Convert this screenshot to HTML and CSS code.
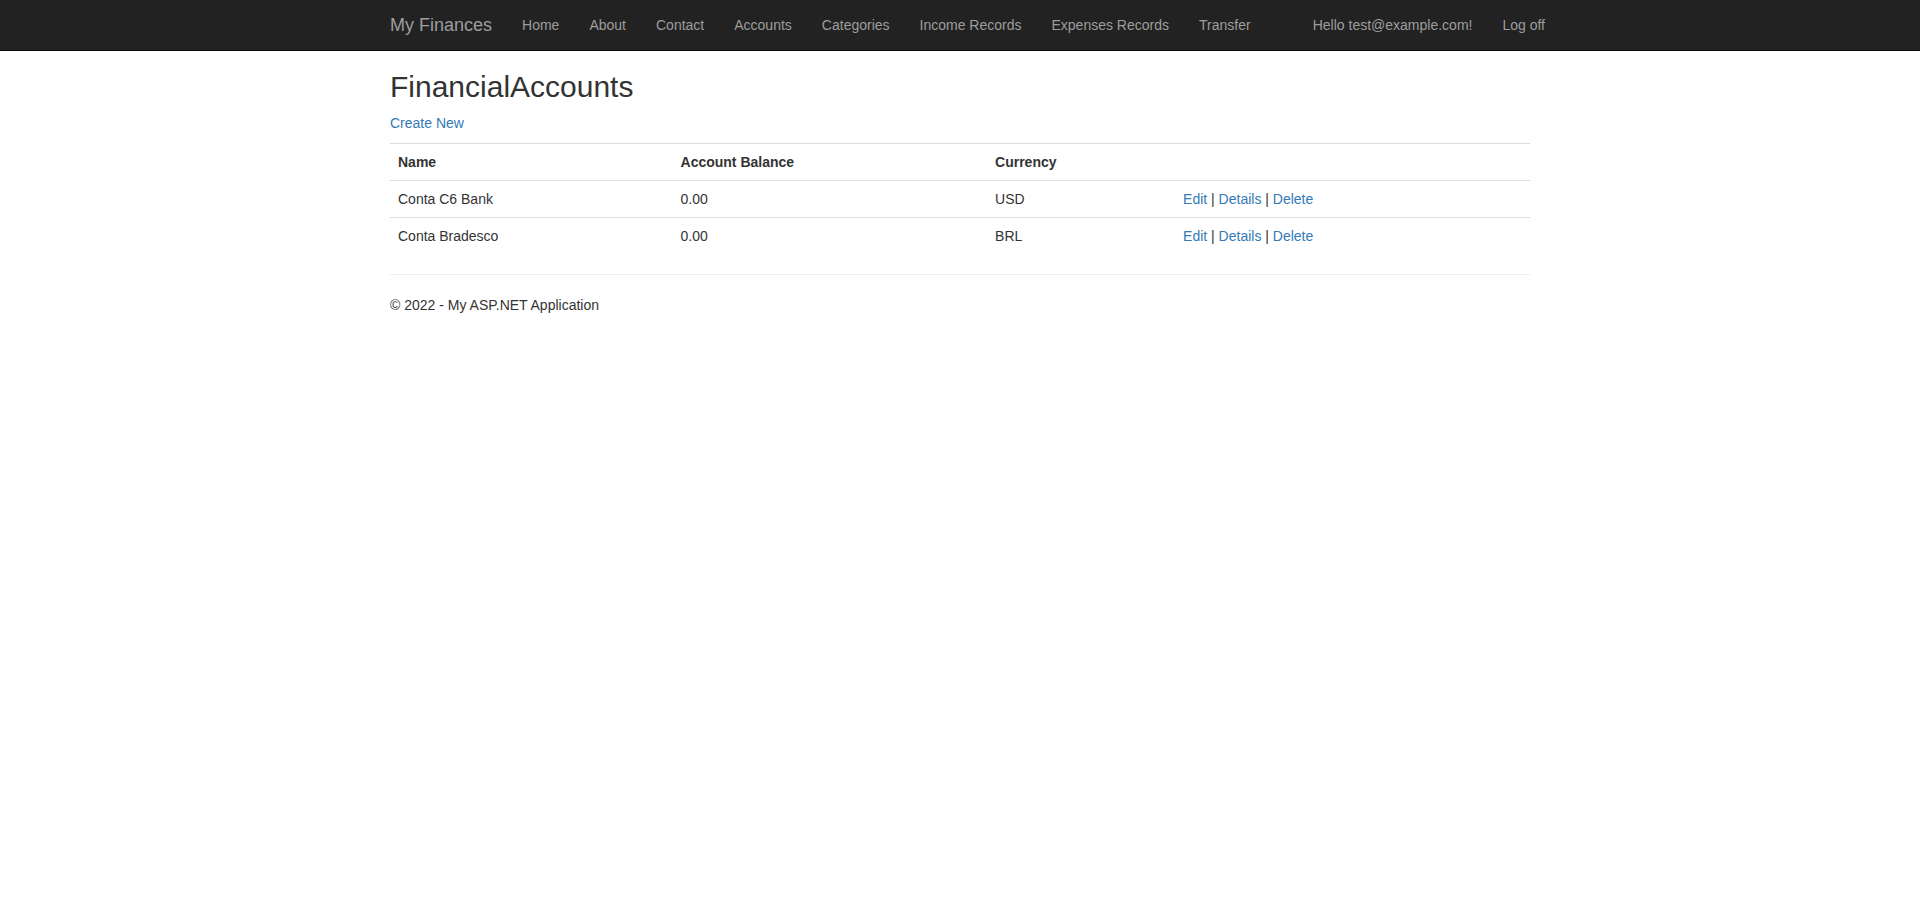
FILE: index.html
```html
<!DOCTYPE html>
<html>
<head>
<meta charset="utf-8">
<title>FinancialAccounts</title>
<link rel="stylesheet" href="styles.css">
</head>
<body>
<div class="navbar">
  <div class="container nav-container">
    <a class="navbar-brand" href="#">My Finances</a>
    <ul class="nav">
      <li><a href="#">Home</a></li>
      <li><a href="#">About</a></li>
      <li><a href="#">Contact</a></li>
      <li><a href="#">Accounts</a></li>
      <li><a href="#">Categories</a></li>
      <li><a href="#">Income Records</a></li>
      <li><a href="#">Expenses Records</a></li>
      <li><a href="#">Transfer</a></li>
    </ul>
    <ul class="nav nav-right">
      <li><a href="#">Hello test@example.com!</a></li>
      <li><a href="#">Log off</a></li>
    </ul>
  </div>
</div>
<div class="container body-content">
  <h2 class="title">FinancialAccounts</h2>
  <p class="para"><a href="#">Create New</a></p>
  <table class="table">
    <tr>
      <th>Name</th>
      <th>Account Balance</th>
      <th>Currency</th>
      <th></th>
    </tr>
    <tr>
      <td>Conta C6 Bank</td>
      <td>0.00</td>
      <td>USD</td>
      <td><a href="#">Edit</a> | <a href="#">Details</a> | <a href="#">Delete</a></td>
    </tr>
    <tr>
      <td>Conta Bradesco</td>
      <td>0.00</td>
      <td>BRL</td>
      <td><a href="#">Edit</a> | <a href="#">Details</a> | <a href="#">Delete</a></td>
    </tr>
  </table>
  <hr class="rule">
  <footer>
    <p class="para">&copy; 2022 - My ASP.NET Application</p>
  </footer>
</div>
</body>
</html>
```
FILE: styles.css
```css
* { box-sizing: border-box; }
html, body { margin: 0; }
body {
  font-family: "Liberation Sans", Arial, Helvetica, sans-serif;
  font-size: 14px;
  line-height: 1.42857143;
  color: #333;
  background: #fff;
  padding-top: 50px;
}
a { color: #337ab7; text-decoration: none; }
.container {
  width: 1170px;
  margin: 0 auto;
  padding: 0 15px;
}
.navbar {
  position: fixed;
  top: 0; left: 0; right: 0;
  height: 51px;
  background: #222;
  border-bottom: 1px solid #080808;
  z-index: 10;
}
.nav-container {
  display: flex;
  align-items: flex-start;
}
.navbar-brand {
  display: block;
  height: 50px;
  padding: 15px;
  margin-left: -15px;
  font-size: 18px;
  line-height: 20px;
  color: #9d9d9d;
}
.nav {
  display: flex;
  list-style: none;
  margin: 0;
  padding: 0;
}
.nav li a {
  display: block;
  padding: 15px;
  line-height: 20px;
  color: #9d9d9d;
}
.nav-right {
  margin-left: auto;
  margin-right: -30px;
}
.body-content { padding: 0 15px; }
.title {
  font-family: inherit;
  font-weight: 500;
  font-size: 30px;
  line-height: 1.1;
  margin: 20px 0 10px;
  color: #333;
}
.para { margin: 0 0 10px; }
.table {
  width: 100%;
  max-width: 100%;
  border-collapse: collapse;
  border-spacing: 0;
  margin-bottom: 20px;
}
.table th, .table td {
  padding: 8px;
  line-height: 20px;
  text-align: left;
  vertical-align: top;
  border-top: 1px solid #ddd;
}
.table th { font-weight: bold; }
.rule {
  margin: 20px 0;
  border: 0;
  border-top: 1px solid #eee;
  height: 0;
}
```
